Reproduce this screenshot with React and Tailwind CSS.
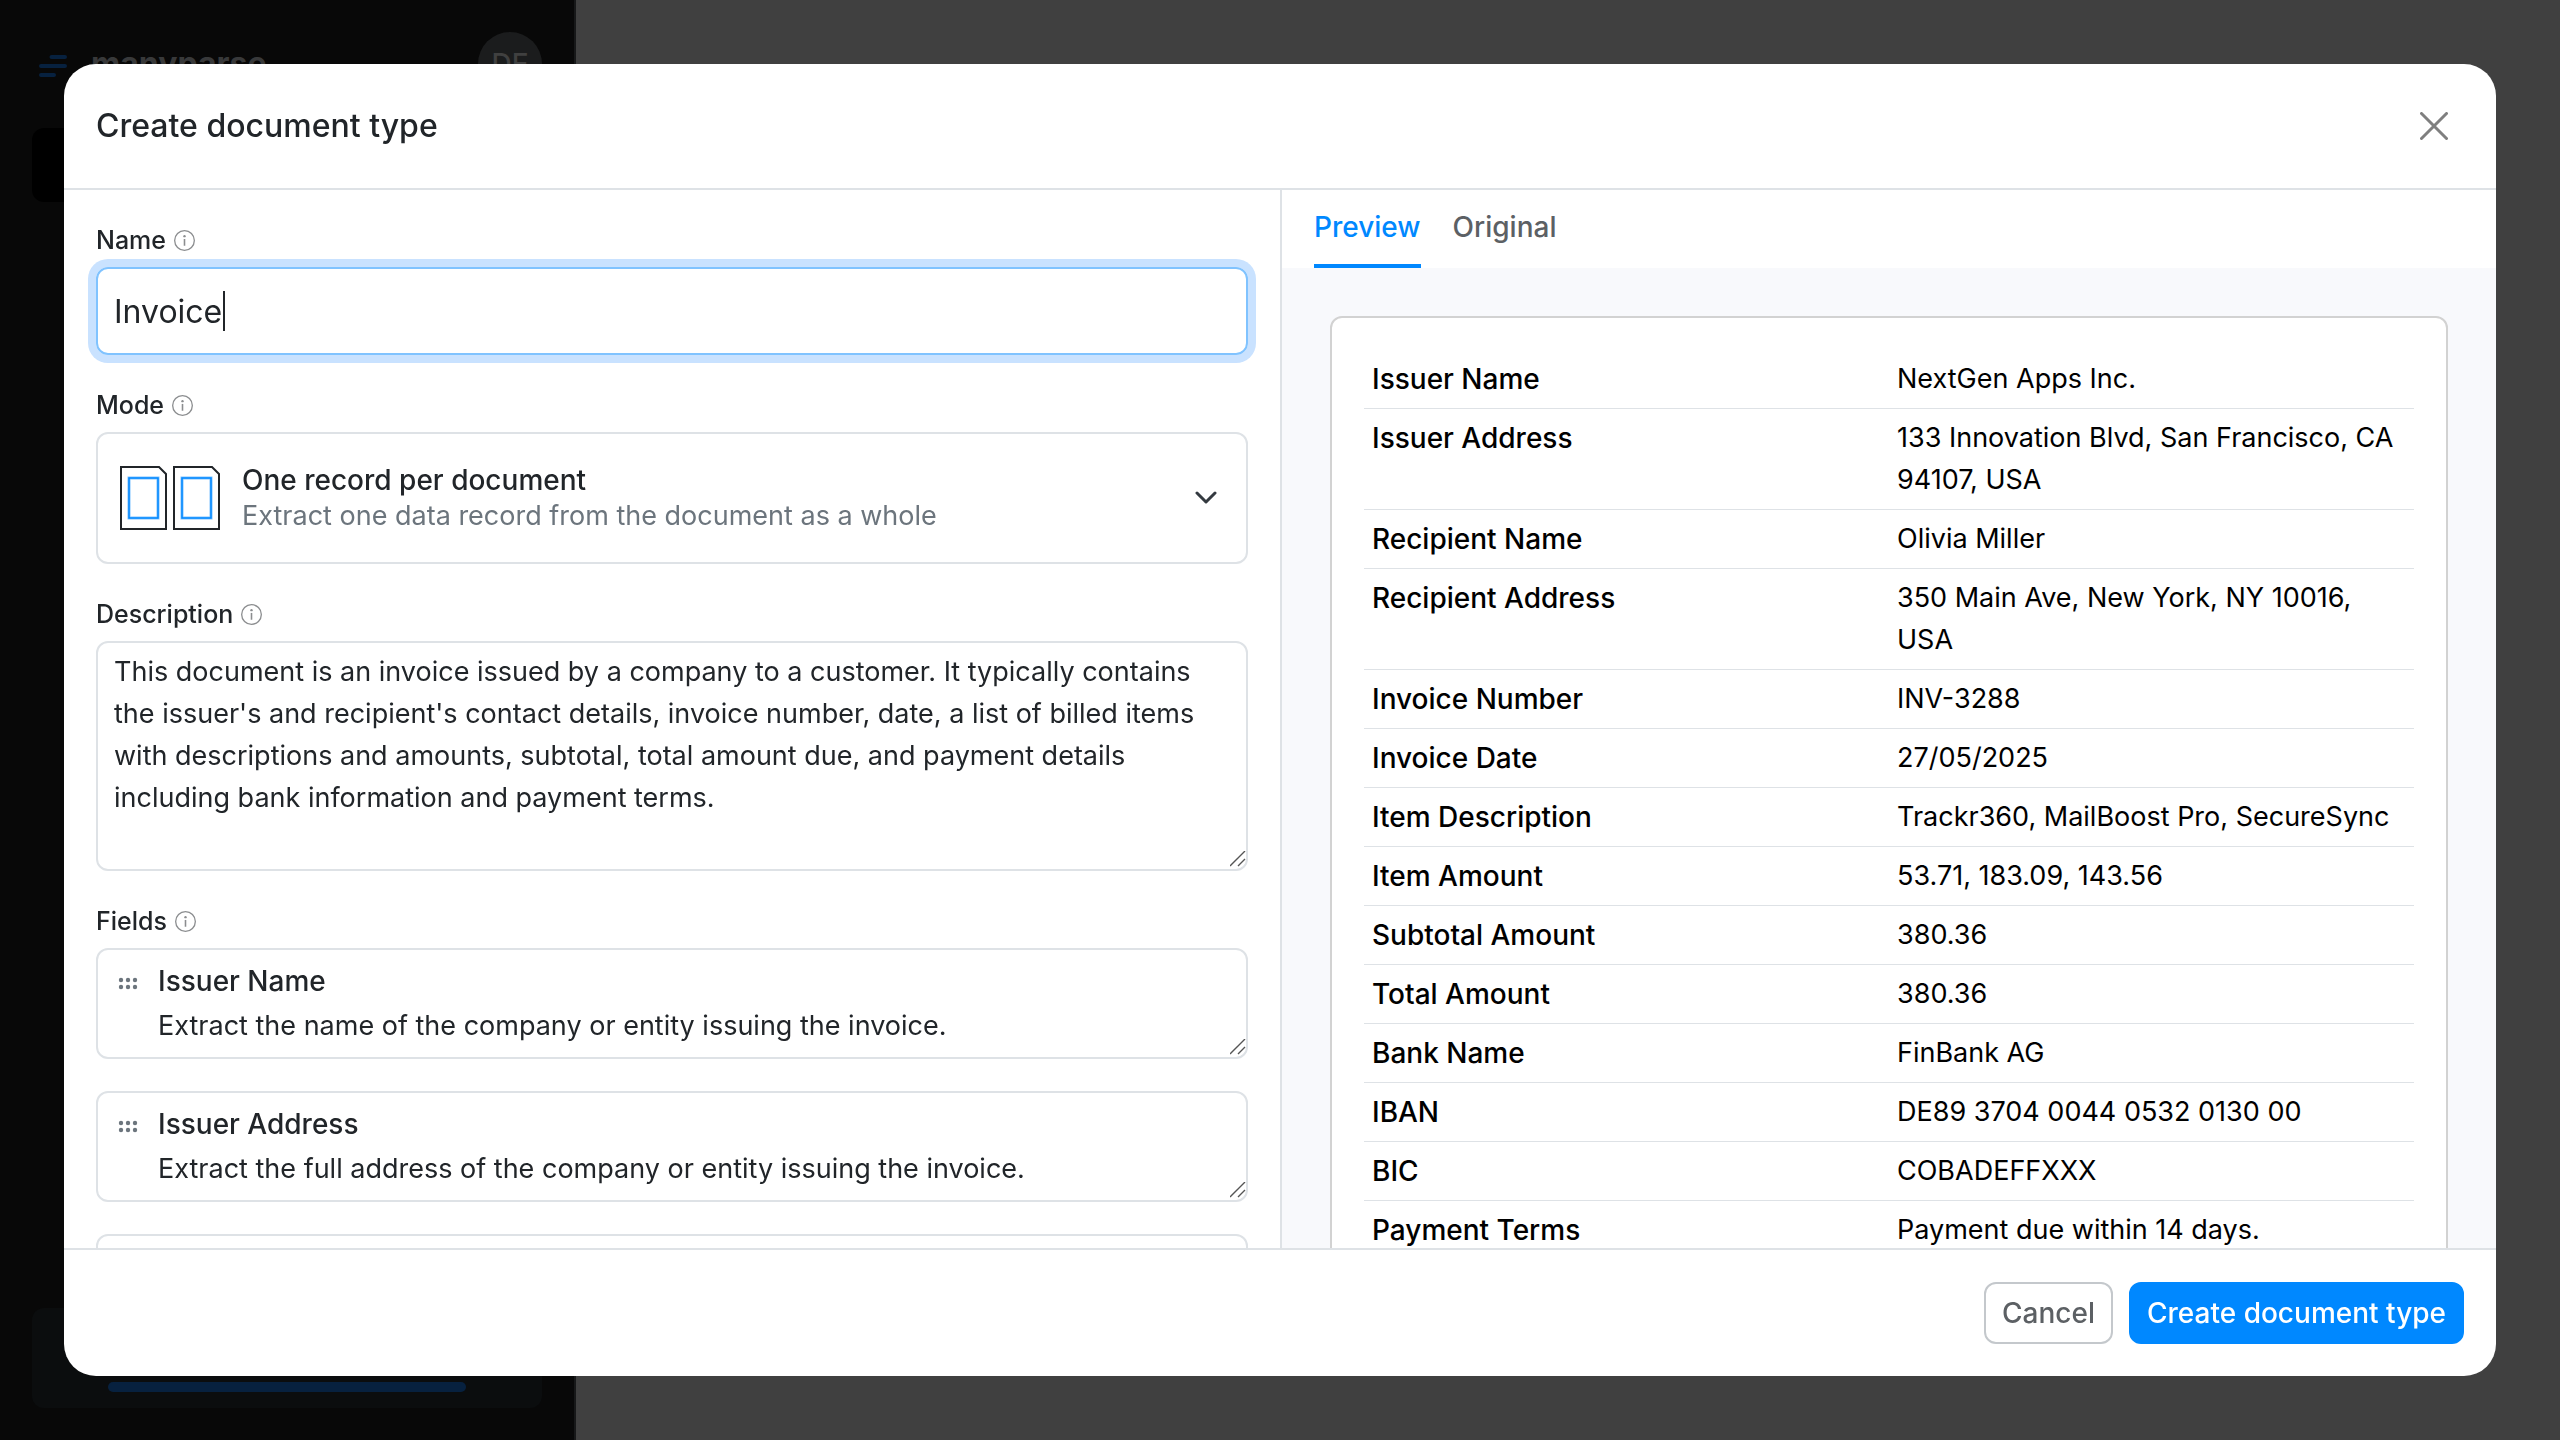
import React from "react";

const FIELDS = [
  ["Issuer Name", "Extract the name of the company or entity issuing the invoice."],
  ["Issuer Address", "Extract the full address of the company or entity issuing the invoice."],
  ["Recipient Name", "Extract the name of the recipient of the invoice."],
];

const ROWS = [
  ["Issuer Name", "NextGen Apps Inc."],
  ["Issuer Address", "133 Innovation Blvd, San Francisco, CA 94107, USA"],
  ["Recipient Name", "Olivia Miller"],
  ["Recipient Address", "350 Main Ave, New York, NY 10016, USA"],
  ["Invoice Number", "INV-3288"],
  ["Invoice Date", "27/05/2025"],
  ["Item Description", "Trackr360, MailBoost Pro, SecureSync"],
  ["Item Amount", "53.71, 183.09, 143.56"],
  ["Subtotal Amount", "380.36"],
  ["Total Amount", "380.36"],
  ["Bank Name", "FinBank AG"],
  ["IBAN", "DE89 3704 0044 0532 0130 00"],
  ["BIC", "COBADEFFXXX"],
  ["Payment Terms", "Payment due within 14 days."],
];

function InfoIcon() {
  return (
    <svg className="size-[21px] text-[#8b8d8f]" viewBox="0 0 16 16" fill="currentColor" aria-hidden="true">
      <path d="M8 15A7 7 0 1 1 8 1a7 7 0 0 1 0 14m0 1A8 8 0 1 0 8 0a8 8 0 0 0 0 16" />
      <path d="M7.4 6.8h1.2v5.2H7.4z" />
      <circle cx="8" cy="4.7" r="0.9" />
    </svg>
  );
}

function Label({ id, htmlFor, children }) {
  const Tag = htmlFor ? "label" : "span";
  return (
    <div className="mb-2 flex items-center gap-2 text-[25px] leading-[37px] font-medium">
      <Tag id={id} htmlFor={htmlFor}>{children}</Tag>
      <InfoIcon />
    </div>
  );
}

function ResizeHandle() {
  return (
    <svg className="pointer-events-none absolute right-0 bottom-0.5 size-4" viewBox="0 0 16 16" stroke="#555" strokeWidth="1.4" aria-hidden="true">
      <path d="M0 15 15 0M8 15 15 8" />
    </svg>
  );
}

function DocumentShape() {
  return (
    <svg className="h-[64px] w-[47px]" viewBox="0 0 47 64" fill="none" aria-hidden="true">
      <path d="M1 1H39L46 8V63H1Z" stroke="#212529" strokeWidth="2" />
      <rect x="9" y="12" width="29" height="40" stroke="#80c3ff" strokeWidth="3" />
      <rect x="9" y="12" width="29" height="40" stroke="#0088ff" strokeWidth="1.5" />
    </svg>
  );
}

function Sidebar() {
  return (
    <aside className="flex w-[576px] flex-col justify-between border-r-2 border-[#171819] bg-[#080808] p-8">
      <div>
        <div className="flex h-16 items-center justify-between">
          <div className="flex items-center gap-6 pl-[7px]">
            <svg className="mt-1 h-[22px] w-7" viewBox="0 0 28 22" stroke="#07213f" strokeWidth="4" strokeLinecap="round" aria-hidden="true">
              <path d="M12.5 2H26M2 11H26M2 20H15" />
            </svg>
            <span className="text-[32px] leading-10 font-bold text-[#38393a]">manyparse</span>
          </div>
          <span className="flex size-16 items-center justify-center rounded-full bg-[#1b1c1d] font-medium text-[#404040]">DE</span>
        </div>
        <div className="mt-8 h-[74px] rounded-xl bg-black" />
      </div>
      <div className="flex h-[100px] items-end rounded-xl bg-[#0b0d0e] px-[76px] pb-4">
        <div className="h-[10px] w-full rounded-full bg-[#07213f]" />
      </div>
    </aside>
  );
}

export default function App() {
  return (
    <div className="flex h-screen overflow-hidden bg-[#404040] font-[Inter,sans-serif] text-[28px] leading-[42px] text-[#212529]">
      <Sidebar />
      <div className="fixed inset-0 flex p-16">
        <section role="dialog" aria-labelledby="title" className="flex min-w-0 flex-1 flex-col overflow-hidden rounded-[32px] bg-white">
          <header className="flex items-center justify-between border-b-2 border-[#dee2e6] py-10 pr-12 pl-8">
            <h1 id="title" className="text-[32px] leading-11 font-medium">Create document type</h1>
            <button type="button" aria-label="Close">
              <svg className="size-7" viewBox="0 0 28 28" stroke="#7f7f7f" strokeWidth="3" strokeLinecap="round" aria-hidden="true">
                <path d="M1.5 1.5 26.5 26.5M26.5 1.5 1.5 26.5" />
              </svg>
            </button>
          </header>

          <div className="grid min-h-0 flex-1 grid-cols-2">
            <form className="min-h-0 overflow-y-auto p-8 [scrollbar-width:none]">
              <Label htmlFor="name">Name</Label>
              <div className="relative mb-8">
                <input id="name" defaultValue="Invoice" className="block h-[88px] w-full rounded-xl border-2 border-[#80c3ff] px-4 text-[32px] ring-8 ring-[#c9e2ff] outline-none" />
                <span className="absolute top-6 left-[127px] h-10 w-0.5 bg-[#212529]" />
              </div>

              <Label id="mode-label">Mode</Label>
              <button type="button" aria-haspopup="listbox" aria-labelledby="mode-label" className="mb-8 flex h-[132px] w-full items-center rounded-xl border-2 border-[#dee2e6] px-[22px] text-left leading-[35px]">
                <DocumentShape />
                <span className="ml-1.5"><DocumentShape /></span>
                <span className="ml-[22px] flex-1">
                  <span className="block font-medium">One record per document</span>
                  <span className="block text-[27px] text-[#6c757d]">Extract one data record from the document as a whole</span>
                </span>
                <svg className="mr-1.5 h-3.5 w-6" viewBox="0 0 24 14" fill="none" stroke="#343a40" strokeWidth="3" strokeLinecap="round" strokeLinejoin="round" aria-hidden="true">
                  <path d="m3 2 9 9 9-9" />
                </svg>
              </button>

              <Label htmlFor="description">Description</Label>
              <div className="relative mb-8 rounded-xl border-2 border-[#dee2e6] px-4 py-2">
                <textarea
                  id="description"
                  className="block h-[210px] w-full resize-none overflow-hidden text-[27px] outline-none"
                  defaultValue="This document is an invoice issued by a company to a customer. It typically contains the issuer's and recipient's contact details, invoice number, date, a list of billed items with descriptions and amounts, subtotal, total amount due, and payment details including bank information and payment terms."
                />
                <ResizeHandle />
              </div>

              <Label id="fields-label">Fields</Label>
              <div role="group" aria-labelledby="fields-label" className="flex flex-col gap-8">
                {FIELDS.map(([name, text]) => (
                  <div key={name} className="relative flex rounded-xl border-2 border-[#dee2e6] py-2.5">
                    <svg className="mt-4 mr-5 ml-5 h-4 w-5 shrink-0" viewBox="0 0 20 16" fill="#6c757d" aria-hidden="true">
                      {[3, 10, 17].map((x) => [4, 11].map((y) => <circle key={`${x}-${y}`} cx={x} cy={y} r="2.2" />))}
                    </svg>
                    <div className="flex min-w-0 flex-1 flex-col gap-[3px]">
                      <input aria-label={`${name} name`} defaultValue={name} className="block h-[42px] w-full font-medium outline-none" />
                      <textarea aria-label={`${name} description`} rows={1} defaultValue={text} className="block h-[42px] w-full resize-none overflow-hidden text-[27px] outline-none" />
                    </div>
                    <ResizeHandle />
                  </div>
                ))}
              </div>
            </form>

            <div className="flex min-h-0 flex-col border-l-2 border-[#dee2e6] bg-[#f8f9fc]">
              <div role="tablist" className="flex gap-8 bg-white px-8 font-medium">
                <button type="button" role="tab" aria-selected="true" className="h-[78px] border-b-4 border-[#0088ff] text-[#0088ff]">Preview</button>
                <button type="button" role="tab" aria-selected="false" className="h-[78px] border-b-4 border-transparent text-[#5c6064]">Original</button>
              </div>
              <div className="min-h-0 flex-1 overflow-y-auto p-12 [scrollbar-width:none]">
                <div className="rounded-xl border-2 border-[#d2d2d2] bg-white p-8 text-black">
                  <table className="w-full table-fixed">
                    <tbody>
                      {ROWS.map(([key, value]) => (
                        <tr key={key} className="border-b border-[#dee2e6] align-top">
                          <th scope="row" className="p-2 text-left font-medium">{key}</th>
                          <td className="p-2 text-[27px]">{value}</td>
                        </tr>
                      ))}
                    </tbody>
                  </table>
                </div>
              </div>
            </div>
          </div>

          <footer className="flex justify-end gap-4 border-t-2 border-[#dee2e6] p-8 font-medium">
            <button type="button" className="rounded-xl border-2 border-[#c4c8cc] px-4 py-2 text-[#5c6064]">Cancel</button>
            <button type="button" className="rounded-xl border-2 border-[#0088ff] bg-[#0088ff] px-4 py-2 text-white">Create document type</button>
          </footer>
        </section>
      </div>
    </div>
  );
}
